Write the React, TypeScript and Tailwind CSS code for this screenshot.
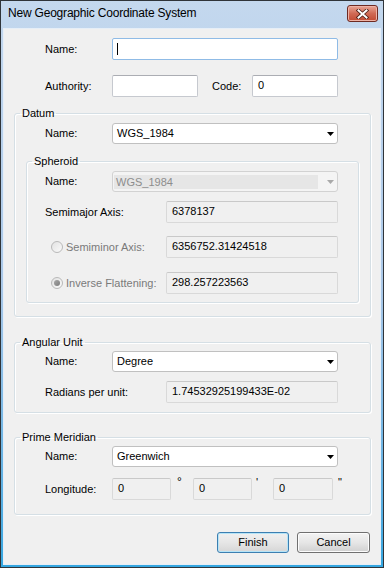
import React from "react";

type BoxProps = {
  className?: string;
  children?: React.ReactNode;
};

// plain edit box, white with a thin grey border
const TextBox = ({ className = "", children }: BoxProps) => (
  <div
    className={`h-[22px] rounded-[2px] border border-[#c6c9cf] border-t-[#abadb3] bg-white pl-[5px] pt-[3px] text-[11px] leading-[13px] text-black ${className}`}
  >
    {children}
  </div>
);

// read-only box keeps the dialog grey
const ReadBox = ({ className = "", children }: BoxProps) => (
  <div
    className={`h-[22px] rounded-[2px] border border-[#d9d9d9] border-t-[#c9c9c9] bg-[#f0f0f0] pl-[5px] pt-[3px] text-[11px] leading-[13px] text-black ${className}`}
  >
    {children}
  </div>
);

const Arrow = ({ color = "#000" }: { color?: string }) => (
  <svg width="7" height="4" viewBox="0 0 7 4" className="shrink-0">
    <path d="M0 0H7L3.5 4Z" fill={color} />
  </svg>
);

const Combo = ({ value }: { value: string }) => (
  <div className="flex h-[21px] w-[226px] items-center justify-between rounded-[3px] border border-[#c0c0c0] bg-white pl-[4px] pr-[3px] text-[11px] leading-[13px] text-black">
    <span>{value}</span>
    <Arrow />
  </div>
);

const DisabledCombo = ({ value }: { value: string }) => (
  <div className="flex h-[21px] w-[226px] items-center rounded-[3px] border border-[#d2d2d2] bg-[#f4f4f4] pl-[1px] pr-[3px] text-[11px]">
    <div className="h-[14px] w-[204px] bg-[#e6e6e6] pl-[2px] leading-[14px] text-[#8d8d8d]">{value}</div>
    <div className="ml-auto">
      <Arrow color="#a9a9a9" />
    </div>
  </div>
);

const Radio = ({ checked }: { checked?: boolean }) => (
  <div className="flex h-[12px] w-[12px] shrink-0 items-center justify-center rounded-full border border-[#b9b9b9] bg-gradient-to-br from-[#e2e2e2] to-[#fafafa]">
    {checked && <div className="h-[6px] w-[6px] rounded-full bg-gradient-to-br from-[#a8a8a8] to-[#7c7c7c]" />}
  </div>
);

const Group = ({ title, className = "", children }: { title: string; className?: string; children: React.ReactNode }) => (
  <fieldset
    className={`rounded-[3px] border border-[#d5dfe5] pl-[5px] shadow-[inset_1px_1px_0_#ffffff,1px_1px_0_#ffffff] ${className}`}
  >
    <legend className="px-[2px] text-[11px] leading-[14px] text-black">{title}</legend>
    {children}
  </fieldset>
);

const Button = ({ label, primary }: { label: string; primary?: boolean }) => (
  <button
    className={`h-[21px] rounded-[3px] border text-[11px] leading-[13px] text-black ${
      primary
        ? "w-[72px] border-[#3c7fb1] bg-gradient-to-b from-[#f0f0f0] via-[#e6e6e6] to-[#d6d6d6] shadow-[inset_0_0_0_1px_#b6e4f7]"
        : "w-[73px] border-[#707070] bg-gradient-to-b from-[#f4f4f4] via-[#e6e6e6] to-[#d0d0d0] shadow-[inset_0_0_0_1px_#fcfcfc]"
    }`}
  >
    {label}
  </button>
);

export default function App() {
  return (
    <div className="flex h-[568px] w-[384px] flex-col border border-[#2f3439] bg-gradient-to-b from-[#c4d8ee] via-[#aac8e8] to-[#33a6e0] font-['Liberation_Sans',Arial,sans-serif]">
      {/* title bar */}
      <div className="flex h-[27px] items-start justify-between pl-[7px] pr-[5px]">
        <span className="mt-[5px] text-[12px] leading-[15px] tracking-[-0.2px] text-black">
          New Geographic Coordinate System
        </span>
        <button className="mt-[4px] flex h-[17px] w-[31px] items-center justify-center rounded-[3px] border border-[#6e2a22] bg-gradient-to-b from-[#e8a595] via-[#d06a55] to-[#c24a33] shadow-[inset_0_0_0_1px_#eeb3a6]">
          <svg width="13" height="10" viewBox="0 0 13 10">
            <path d="M2.5 1.5L10.5 8.5M10.5 1.5L2.5 8.5" stroke="#4a1d16" strokeWidth="3.6" strokeLinecap="square" />
            <path d="M2.5 1.5L10.5 8.5M10.5 1.5L2.5 8.5" stroke="#ffffff" strokeWidth="2" strokeLinecap="square" />
          </svg>
        </button>
      </div>

      {/* client area */}
      <div className="mx-[2px] flex h-[537px] flex-col border border-[#e6eef7] bg-[#f0f0f0] text-[11px] leading-[13px] text-black">
        <div className="mt-[9px] flex items-center pl-[41px]">
          <span className="w-[67px]">Name:</span>
          <div className="flex h-[22px] w-[226px] items-center rounded-[2px] border border-[#8fbbe6] bg-white pl-[4px]">
            <div className="h-[12px] w-[1px] bg-black" />
          </div>
        </div>

        <div className="mt-[15px] flex items-center pl-[41px]">
          <span className="w-[67px]">Authority:</span>
          <TextBox className="w-[86px]" />
          <span className="ml-[14px] w-[40px]">Code:</span>
          <TextBox className="w-[86px]">0</TextBox>
        </div>

        <Group title="Datum" className="ml-[10px] mt-[9px] w-[357px] pb-[13px]">
          <div className="mt-[3px] flex items-center pl-[25px]">
            <span className="w-[67px]">Name:</span>
            <Combo value="WGS_1984" />
          </div>

          <Group title="Spheroid" className="ml-[6px] mt-[10px] w-[333px] pb-[8px]">
            <div className="mt-[3px] flex items-center pl-[13px]">
              <span className="w-[67px]">Name:</span>
              <DisabledCombo value="WGS_1984" />
            </div>
            <div className="mt-[9px] flex items-center pl-[13px]">
              <span className="w-[121px]">Semimajor Axis:</span>
              <ReadBox className="w-[172px]">6378137</ReadBox>
            </div>
            <div className="mt-[13px] flex items-center pl-[19px]">
              <Radio />
              <span className="ml-[3px] w-[100px] text-[#7a7a7a]">Semiminor Axis:</span>
              <ReadBox className="w-[172px]">6356752.31424518</ReadBox>
            </div>
            <div className="mt-[14px] flex items-center pl-[19px]">
              <Radio checked />
              <span className="ml-[3px] w-[100px] text-[#7a7a7a]">Inverse Flattening:</span>
              <ReadBox className="w-[172px]">298.257223563</ReadBox>
            </div>
          </Group>
        </Group>

        <Group title="Angular Unit" className="ml-[10px] mt-[18px] w-[357px] pb-[9px]">
          <div className="mt-[2px] flex items-center pl-[25px]">
            <span className="w-[67px]">Name:</span>
            <Combo value="Degree" />
          </div>
          <div className="mt-[9px] flex items-center pl-[25px]">
            <span className="w-[121px]">Radians per unit:</span>
            <ReadBox className="w-[172px]">1.74532925199433E-02</ReadBox>
          </div>
        </Group>

        <Group title="Prime Meridian" className="ml-[10px] mt-[17px] w-[357px] pb-[14px]">
          <div className="mt-[2px] flex items-center pl-[25px]">
            <span className="w-[67px]">Name:</span>
            <Combo value="Greenwich" />
          </div>
          <div className="mt-[11px] flex items-center pl-[25px]">
            <span className="w-[67px]">Longitude:</span>
            <ReadBox className="w-[59px]">0</ReadBox>
            <span className="-mt-[2px] w-[22px] self-start pl-[6px] text-[12px]">°</span>
            <ReadBox className="w-[59px]">0</ReadBox>
            <span className="-mt-[2px] w-[21px] self-start pl-[4px]">'</span>
            <ReadBox className="w-[60px]">0</ReadBox>
            <span className="-mt-[2px] self-start pl-[5px]">"</span>
          </div>
        </Group>

        <div className="mr-[10px] mt-[17px] flex justify-end gap-[8px]">
          <Button label="Finish" primary />
          <Button label="Cancel" />
        </div>
      </div>
    </div>
  );
}
